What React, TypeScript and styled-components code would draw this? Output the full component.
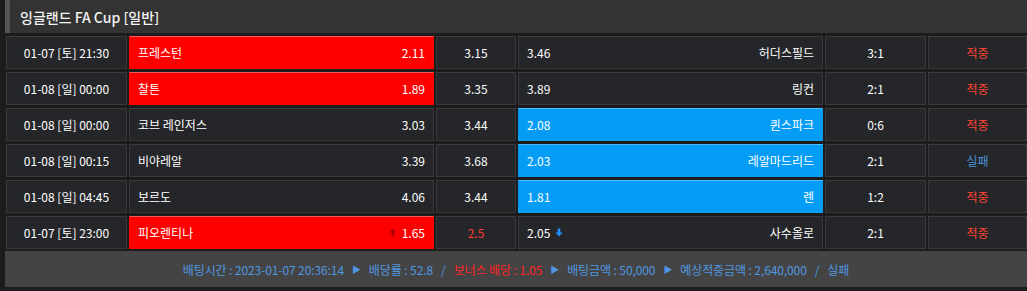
import styled, { createGlobalStyle } from "styled-components";

const GlobalStyle = createGlobalStyle`
  html, body {
    margin: 0;
    padding: 0;
    background: #1c1c1d;
    overflow: hidden;
  }
  body {
    font-family: "Noto Sans CJK KR", "Liberation Sans", sans-serif;
    color: #fff;
  }
`;

type Pick = "home" | "away" | "none";
type Move = "up" | "down" | undefined;

interface IMatch {
  date: string;
  home: string;
  homeOdds: string;
  draw: string;
  away: string;
  awayOdds: string;
  score: string;
  result: "적중" | "실패";
  pick: Pick;
  homeMove?: Move;
  awayMove?: Move;
  drawHot?: boolean;
}

const matches: IMatch[] = [
  { date: "01-07 [토] 21:30", home: "프레스턴", homeOdds: "2.11", draw: "3.15", away: "허더스필드", awayOdds: "3.46", score: "3:1", result: "적중", pick: "home" },
  { date: "01-08 [일] 00:00", home: "찰튼", homeOdds: "1.89", draw: "3.35", away: "링컨", awayOdds: "3.89", score: "2:1", result: "적중", pick: "home" },
  { date: "01-08 [일] 00:00", home: "코브 레인저스", homeOdds: "3.03", draw: "3.44", away: "퀸스파크", awayOdds: "2.08", score: "0:6", result: "적중", pick: "away" },
  { date: "01-08 [일] 00:15", home: "비야레알", homeOdds: "3.39", draw: "3.68", away: "레알마드리드", awayOdds: "2.03", score: "2:1", result: "실패", pick: "away" },
  { date: "01-08 [일] 04:45", home: "보르도", homeOdds: "4.06", draw: "3.44", away: "렌", awayOdds: "1.81", score: "1:2", result: "적중", pick: "away" },
  { date: "01-07 [토] 23:00", home: "피오렌티나", homeOdds: "1.65", draw: "2.5", away: "사수올로", awayOdds: "2.05", score: "2:1", result: "적중", pick: "home", homeMove: "up", awayMove: "down", drawHot: true },
];

const Wrap = styled.div`
  width: 1027px;
  padding-left: 5px;
  box-sizing: border-box;
  display: flex;
  flex-direction: column;
`;

const Header = styled.header`
  height: 33px;
  display: flex;
  align-items: center;
  padding-left: 10px;
  background: #333333;
  border-left: 5px solid #555555;
  box-sizing: border-box;
  font-size: 14px;
  font-weight: 500;
  color: #f2f2f2;
`;

const Table = styled.section`
  display: flex;
  flex-direction: column;
  gap: 3px;
  margin-top: 3px;
  padding-left: 1px;
`;

const Row = styled.div`
  display: grid;
  grid-template-columns: 121px 305px 80px 305px 101px 99px;
  gap: 2px;
  height: 33px;
`;

const Cell = styled.div<{ $tone?: Pick }>`
  box-sizing: border-box;
  display: flex;
  align-items: center;
  justify-content: center;
  background: ${({ $tone }) =>
    $tone === "home" ? "#ff0000" : $tone === "away" ? "#049cf5" : "#252629"};
  border: 1px solid
    ${({ $tone }) =>
      $tone === "home" ? "#ff0000" : $tone === "away" ? "#049cf5" : "#38393b"};
  border-top-color: ${({ $tone }) =>
    $tone === "home" ? "#ff5a5a" : $tone === "away" ? "#4fbcff" : "#3a3b3d"};
  font-size: 12px;
  color: #fff;
  white-space: nowrap;
`;

const TeamCell = styled(Cell)<{ $reverse?: boolean }>`
  justify-content: space-between;
  flex-direction: ${({ $reverse }) => ($reverse ? "row-reverse" : "row")};
  padding: 0 8px;
`;

const Odds = styled.span`
  display: flex;
  align-items: center;
  gap: 5px;
`;

const DrawText = styled.span<{ $hot?: boolean }>`
  color: ${({ $hot }) => ($hot ? "#ff3b30" : "#fff")};
`;

const ResultText = styled.span<{ $hit: boolean }>`
  color: ${({ $hit }) => ($hit ? "#ff4433" : "#4a90d9")};
`;

const Footer = styled.footer`
  margin-top: 2px;
  height: 36px;
  background: #444444;
  display: flex;
  align-items: center;
  justify-content: center;
  font-size: 12px;
  letter-spacing: -0.1px;
  color: #4f97e0;
  white-space: nowrap;
`;

const Sep = styled.span<{ $slash?: boolean }>`
  margin: 0 8px;
  font-size: ${({ $slash }) => ($slash ? "12px" : "9px")};
`;

const Bonus = styled.span`
  color: #ff2222;
`;

const Arrow = ({ dir }: { dir: "up" | "down" }) => (
  <svg width="8" height="9" viewBox="0 0 9 10">
    {dir === "up" ? (
      <path d="M4.5 0.5 L8.5 5 L6 5 L6 9.5 L3 9.5 L3 5 L0.5 5 Z" fill="#b30000" />
    ) : (
      <path d="M4.5 9.5 L8.5 5 L6 5 L6 0.5 L3 0.5 L3 5 L0.5 5 Z" fill="#1e90ff" />
    )}
  </svg>
);

const MatchRow = ({ m }: { m: IMatch }) => (
  <Row>
    <Cell>{m.date}</Cell>
    <TeamCell $tone={m.pick === "home" ? "home" : "none"}>
      <span>{m.home}</span>
      <Odds>
        {m.homeMove && <Arrow dir={m.homeMove} />}
        {m.homeOdds}
      </Odds>
    </TeamCell>
    <Cell>
      <DrawText $hot={m.drawHot}>{m.draw}</DrawText>
    </Cell>
    <TeamCell $reverse $tone={m.pick === "away" ? "away" : "none"}>
      <span>{m.away}</span>
      <Odds>
        {m.awayOdds}
        {m.awayMove && <Arrow dir={m.awayMove} />}
      </Odds>
    </TeamCell>
    <Cell>{m.score}</Cell>
    <Cell>
      <ResultText $hit={m.result === "적중"}>{m.result}</ResultText>
    </Cell>
  </Row>
);

const App = () => {
  return (
    <>
      <GlobalStyle />
      <Wrap>
        <Header>잉글랜드 FA Cup [일반]</Header>
        <Table>
          {matches.map((m, idx) => (
            <MatchRow key={idx} m={m} />
          ))}
        </Table>
        <Footer>
          배팅시간 : 2023-01-07 20:36:14
          <Sep>▶</Sep>
          배당률 : 52.8
          <Sep $slash>/</Sep>
          <Bonus>보너스 배당 : 1.05</Bonus>
          <Sep>▶</Sep>
          배팅금액 : 50,000
          <Sep>▶</Sep>
          예상적중금액 : 2,640,000
          <Sep $slash>/</Sep>
          실패
        </Footer>
      </Wrap>
    </>
  );
};

export default App;
